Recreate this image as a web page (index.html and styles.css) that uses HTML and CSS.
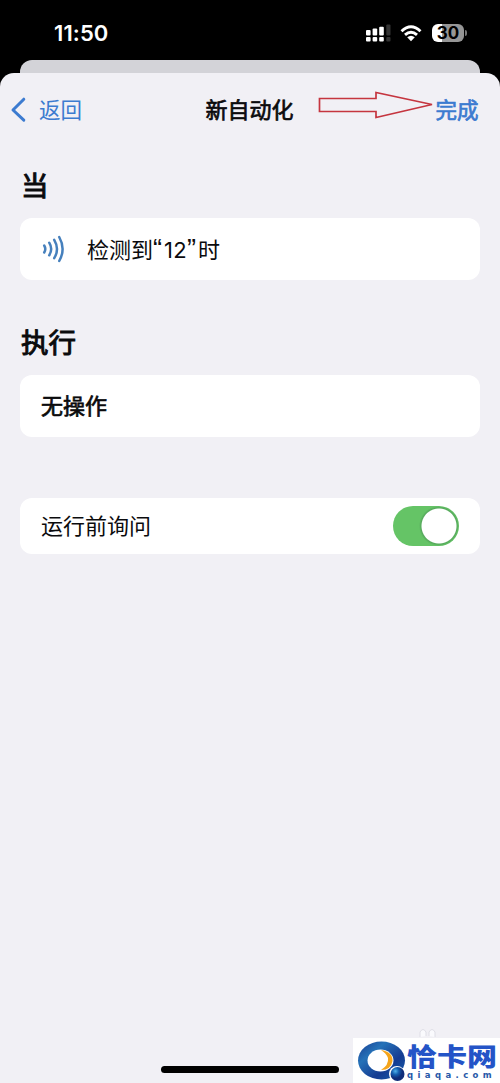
FILE: index.html
```html
<!DOCTYPE html>
<html lang="zh-CN">
<head>
<meta charset="utf-8">
<title>新自动化</title>
<link rel="stylesheet" href="styles.css">
</head>
<body>
<div class="phone">
  <header class="status">
    <span class="time">11:50</span>
    <div class="indicators">
      <svg class="signal" width="26" height="18" viewBox="0 0 26 18">
        <g fill="#fff"><rect x="0" y="6" width="4.600" height="5.500" rx="1"/><rect x="6.600" y="4.500" width="4.600" height="7" rx="1"/><rect x="13.200" y="2.800" width="4.600" height="8.700" rx="1"/><rect x="0" y="13" width="4.600" height="4.500" rx="1"/><rect x="6.600" y="13" width="4.600" height="4.500" rx="1"/><rect x="13.200" y="13" width="4.600" height="4.500" rx="1"/></g>
        <g fill="#333"><rect x="20.300" y=".5" width="4.200" height="11" rx="1"/><rect x="20.300" y="13" width="4.200" height="4.500" rx="1"/></g>
      </svg>
      <svg class="wifi" width="22" height="17" viewBox="0 0 22 17">
        <path d="M1.500 6.200Q11-2.600 20.500 6.200M5 9.900Q11 4.400 17 9.900" fill="none" stroke="#fff" stroke-width="2.900"/>
        <path d="M7.200 12.300Q11 9 14.800 12.300L11 16.300Z" fill="#fff"/>
      </svg>
      <div class="battery"><span>30</span></div>
      <i class="battery-tip"></i>
    </div>
  </header>
  <div class="back-sheet"></div>
  <main class="sheet">
    <nav class="nav">
      <a class="back"><svg width="16" height="26" viewBox="0 0 16 26"><path d="M13.800 2.200L3 13L13.800 23.200" fill="none" stroke="#3c7bd0" stroke-width="3" stroke-linecap="round" stroke-linejoin="round"/></svg><span>返回</span></a>
      <h1>新自动化</h1>
      <div class="done">
        <svg width="116" height="28" viewBox="0 0 116 28"><path d="M1.500 7.500H58V1.500L114 13.500L58 26.500V20.500H1.500Z" fill="none" stroke="#c5353f" stroke-width="1.700"/></svg>
        <a>完成</a>
      </div>
    </nav>
    <h2 class="when">当</h2>
    <section class="card trigger">
      <svg width="24" height="28" viewBox="0 0 24 28"><path d="M3.200 10.500Q5.400 14 3.200 17.500M8.200 7.700Q12.200 14 8.200 20.300M13.200 4.800Q18.800 14 13.200 23.200M18.200 2Q25 14 18.200 26" fill="none" stroke="#4680bd" stroke-width="2.500" stroke-linecap="round"/></svg>
      <span>检测到<b class="quote">“</b><b class="number">12</b><b class="quote">”</b>时</span>
    </section>
    <h2 class="do">执行</h2>
    <section class="card action"><span>无操作</span></section>
    <section class="card ask"><span>运行前询问</span><i class="toggle"></i></section>
  </main>
  <div class="home-bar"></div>
  <svg class="paws" width="20" height="9" viewBox="0 0 20 9"><path d="M2 9V4Q5-1 8 4V8M11 8V4Q14-1 17 4V9" fill="#fafafd" stroke="#dedee6"/></svg>
  <aside class="watermark">
    <svg width="49" height="41" viewBox="0 0 49 41">
      <defs>
        <linearGradient id="ring" x1="0" y1="0" x2="1" y2="1"><stop offset="0" stop-color="#183b91"/><stop offset=".3" stop-color="#2572b8"/><stop offset=".65" stop-color="#153b91"/><stop offset="1" stop-color="#1761ae"/></linearGradient>
        <radialGradient id="dot" cx=".35" cy=".3"><stop offset="0" stop-color="#4fb2eb"/><stop offset=".5" stop-color="#145eaf"/><stop offset="1" stop-color="#102d79"/></radialGradient>
      </defs>
      <ellipse cx="24.500" cy="19.500" rx="23.500" ry="19" fill="url(#ring)"/>
      <ellipse cx="23.500" cy="19.500" rx="13" ry="11" fill="#fff"/>
      <path d="M24 9Q36 11 35.500 20Q34 29 24 29Q32 24 31 17Q29 12 24 9Z" fill="#f5a51b"/>
      <circle cx="40" cy="33" r="8" fill="#fff"/>
      <circle cx="40.500" cy="33" r="7" fill="url(#dot)"/>
    </svg>
    <div class="brand"><strong>恰卡网</strong><small>qiaqa.com</small></div>
  </aside>
</div>
</body>
</html>
```

FILE: styles.css
```css
* { box-sizing: border-box; }
body { margin: 0; background: #000; font-family: "Noto Sans CJK SC", sans-serif; }
.phone { position: relative; width: 500px; height: 1083px; overflow: hidden; color: #0b0b0d; background: #000; }
.status { height: 60px; padding: 8px 33px 0 54px; display: flex; justify-content: space-between; align-items: flex-start; }
.time { color: #fff; font: 600 22px/50px Inter, sans-serif; letter-spacing: .1px; }
.indicators { display: flex; padding-top: 16px; }
.signal { margin: 0 8px 0 0; }
.wifi { margin: 1px 10px 0 0; }
.battery { width: 32px; height: 18px; border-radius: 6px; background: linear-gradient(90deg, #fff 32%, #969696 32%); color: #000; font: 700 17px/18px Inter, sans-serif; text-align: center; }
.battery-tip { width: 2px; height: 6px; margin: 6px 0 0 1px; border-radius: 0 2px 2px 0; background: #777; }
.back-sheet { height: 13px; margin: 0 20px; border-radius: 12px 12px 0 0; background: #d3d3d8; }
.sheet { height: 1010px; padding: 0 20px; border-radius: 14px 14px 0 0; background: #f1f0f5; }
.nav { display: grid; grid-template-columns: 195.5px 103px 1fr; height: 70px; margin: 0 -10px; align-items: center; font-size: 22px; line-height: 32px; color: #3c7bd0; }
.back { display: flex; align-items: center; gap: 13px; }
.back span { font-size: 21.5px; margin-top: 1px; }
.back svg { display: block; margin-top: 3px; }
.nav h1 { margin: 0; color: #0b0b0d; font-size: 22px; font-weight: 400; -webkit-text-stroke: .7px; }
.done { display: flex; align-items: center; justify-content: flex-end; padding-right: 11.5px; }
.done svg { flex: none; margin: -7px 1px 0 0; }
.done a { margin-top: 1px; font-weight: 400; -webkit-text-stroke: .7px; white-space: nowrap; font-size: 21.5px; }
h2 { margin: 0; padding-left: 1px; font-size: 27.5px; line-height: 40px; font-weight: 400; -webkit-text-stroke: 1px; }
.when { margin-top: 21px; }
.card { display: flex; align-items: center; height: 62px; padding: 0 21px; border-radius: 12px; background: #fff; font-size: 22px; line-height: 32px; }
.trigger { margin-top: 13.5px; gap: 22px; }
.quote, .number { font-weight: 400; }
.quote { font-family: "Liberation Sans", sans-serif; font-size: 27px; line-height: 20px; letter-spacing: 2px; }
.number { font-family: Inter, sans-serif; letter-spacing: .3px; }
.do { margin-top: 41px; }
.action { margin-top: 14px; }
.action span { -webkit-text-stroke: .7px; margin-top: -3px; }
.ask { height: 56px; margin-top: 61px; justify-content: space-between; }
.ask span { margin-top: -3px; }
.toggle { width: 66px; height: 40px; border-radius: 20px; background: radial-gradient(circle at 46px 20px, #fff 17px, #56a95c 18px, #65c466 20px); }
.home-bar { position: absolute; left: 161px; top: 1066px; width: 178px; height: 7px; border-radius: 4px; background: #000; }
.paws { position: absolute; left: 418px; top: 1028px; }
.watermark { position: absolute; left: 353px; top: 1038px; width: 147px; height: 45px; padding: 3px 0 0 4px; display: flex; background: #fff; }
.watermark svg { flex: none; }
.brand { display: flex; flex-direction: column; color: #2454c7; padding-left: 1px; }
.brand strong { height: 30px; font-size: 25px; line-height: 28px; font-weight: 900; white-space: nowrap; transform: scaleX(1.2); transform-origin: left; }
.brand small { margin-left: 0; font: 700 8.5px/9px "DejaVu Sans", sans-serif; letter-spacing: 4.4px; color: #2858a8; }
```
